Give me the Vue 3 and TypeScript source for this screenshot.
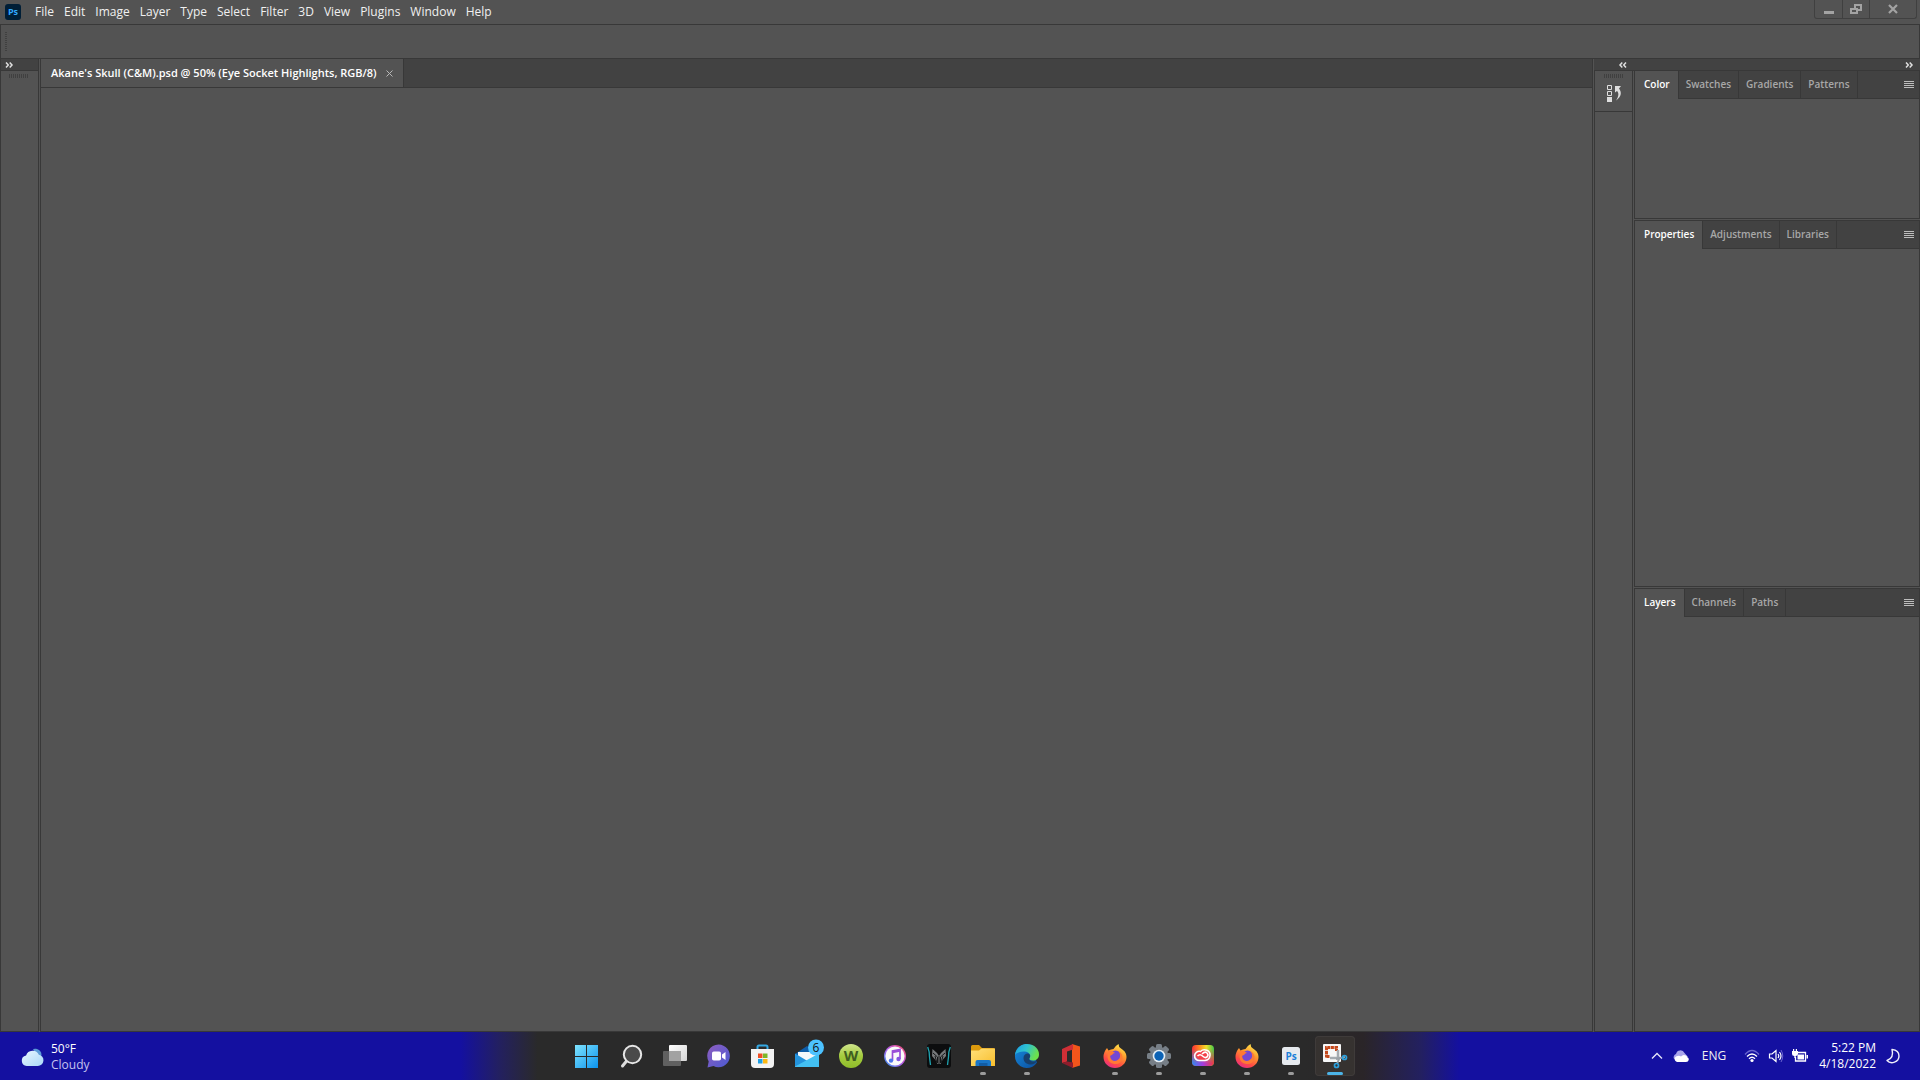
<script setup lang="ts">
interface PanelGroup {
  id: string
  tabs: string[]
}
interface TaskApp {
  id: string
  label: string
  running?: boolean
  active?: boolean
}

const menus: string[] = ['File', 'Edit', 'Image', 'Layer', 'Type', 'Select', 'Filter', '3D', 'View', 'Plugins', 'Window', 'Help']

const panels: PanelGroup[] = [
  { id: 'color', tabs: ['Color', 'Swatches', 'Gradients', 'Patterns'] },
  { id: 'properties', tabs: ['Properties', 'Adjustments', 'Libraries'] },
  { id: 'layers', tabs: ['Layers', 'Channels', 'Paths'] },
]

const apps: TaskApp[] = [
  { id: 'start', label: 'Start' },
  { id: 'search', label: 'Search' },
  { id: 'tasks', label: 'Task View' },
  { id: 'chat', label: 'Chat' },
  { id: 'store', label: 'Microsoft Store' },
  { id: 'mail', label: 'Mail' },
  { id: 'webroot', label: 'Webroot' },
  { id: 'itunes', label: 'iTunes' },
  { id: 'predator', label: 'PredatorSense' },
  { id: 'files', label: 'File Explorer', running: true },
  { id: 'edge', label: 'Microsoft Edge', running: true },
  { id: 'office', label: 'Office' },
  { id: 'firefox', label: 'Firefox', running: true },
  { id: 'settings', label: 'Settings', running: true },
  { id: 'cloud', label: 'Creative Cloud', running: true },
  { id: 'firefox', label: 'Firefox', running: true },
  { id: 'photoshop', label: 'Photoshop', running: true },
  { id: 'snip', label: 'Snipping Tool', running: true, active: true },
]

const gearTeeth: number[] = [0, 45, 90, 135, 180, 225, 270, 315]
</script>

<template>
  <div class="screen">
    <header class="menubar">
      <svg class="logo" viewBox="0 0 16 16" role="img" aria-label="Photoshop">
        <rect width="16" height="16" rx="3" fill="#001e36" />
        <text x="8" y="11" text-anchor="middle" class="ps" font-size="9" fill="#31a8ff">Ps</text>
      </svg>
      <nav class="menus">
        <button v-for="m in menus" :key="m" type="button">{{ m }}</button>
      </nav>
      <div class="window-controls">
        <button type="button" aria-label="Minimize">
          <svg width="12" height="12" viewBox="0 0 12 12"><path d="M1 8h10v3H1z" fill="#a3a3a3" /></svg>
        </button>
        <button type="button" aria-label="Restore">
          <svg width="12" height="12" viewBox="0 0 12 12"><path d="M5 5V2h6v5H8M1 6h6v4H1z" fill="none" stroke="#a3a3a3" stroke-width="2" /></svg>
        </button>
        <button type="button" class="wide" aria-label="Close">
          <svg width="12" height="12" viewBox="0 0 12 12"><path d="M2 2l8 8M10 2l-8 8" stroke="#a3a3a3" stroke-width="2.200" /></svg>
        </button>
      </div>
    </header>

    <div class="options"><span class="grip-v"></span></div>

    <main class="workspace">
      <aside class="tools">
        <div class="dock-head">
          <button type="button" class="chev" aria-label="Expand tools">
            <svg width="8" height="6" viewBox="0 0 8 6"><path d="M1 .5L3.300 3 1 5.500M4.700 .5L7 3 4.700 5.500" fill="none" stroke="#dedede" stroke-width="1.500" /></svg>
          </button>
        </div>
        <span class="grip-h"></span>
      </aside>

      <section class="document">
        <div class="doc-tabs">
          <div class="doc-tab">
            <span>Akane's Skull (C&amp;M).psd @ 50% (Eye Socket Highlights, RGB/8)</span>
            <button type="button" aria-label="Close document">
              <svg width="7" height="7" viewBox="0 0 7 7"><path d="M.5 .5l6 6M6.500 .5l-6 6" stroke="#b8b8b8" /></svg>
            </button>
          </div>
        </div>
        <div class="canvas"></div>
      </section>

      <div class="docks">
        <div class="dock-head between">
          <button type="button" class="chev" aria-label="Expand panels">
            <svg width="8" height="6" viewBox="0 0 8 6"><path d="M3.300 .5L1 3l2.300 2.500M7 .5L4.700 3 7 5.500" fill="none" stroke="#dedede" stroke-width="1.500" /></svg>
          </button>
          <button type="button" class="chev" aria-label="Collapse panels">
            <svg width="8" height="6" viewBox="0 0 8 6"><path d="M1 .5L3.300 3 1 5.500M4.700 .5L7 3 4.700 5.500" fill="none" stroke="#dedede" stroke-width="1.500" /></svg>
          </button>
        </div>
        <div class="dock-body">
          <aside class="icon-dock">
            <div class="icon-group">
              <span class="grip-h"></span>
              <button type="button" aria-label="History">
                <svg width="16" height="18" viewBox="0 0 16 18">
                  <path d="M1.500 1.500h4v4h-4zM1.500 7.500h4v4h-4z" fill="none" stroke="#dedede" />
                  <path d="M1 13h5v5H1z" fill="#dedede" />
                  <path d="M9 2h6l-2 2.500c3 4 2.500 8-3 12 3-4.500 3-7.500 1-9.500L9 8.500z" fill="#dedede" />
                </svg>
              </button>
            </div>
          </aside>
          <div class="panels">
            <section v-for="p in panels" :key="p.id" class="panel" :class="p.id">
              <div class="panel-tabs" role="tablist">
                <button v-for="(t, i) in p.tabs" :key="t" type="button" role="tab" :aria-selected="i === 0" :class="{ current: i === 0 }">{{ t }}</button>
                <button type="button" class="panel-menu" aria-label="Panel menu">
                  <svg width="10" height="8" viewBox="0 0 10 8"><path d="M0 .5h10M0 2.500h10M0 4.500h10M0 6.500h10" stroke="#bdbdbd" /></svg>
                </button>
              </div>
            </section>
          </div>
        </div>
      </div>
    </main>

    <footer class="taskbar">
      <button type="button" class="weather">
        <svg width="24" height="19" viewBox="0 0 22 18" aria-hidden="true">
          <defs>
            <linearGradient id="wc" x1="0" y1="0" x2="1" y2="1"><stop offset="0" stop-color="#e9f6ff" /><stop offset="1" stop-color="#a9d8f8" /></linearGradient>
          </defs>
          <path d="M12 1a6 6 0 0 1 8 6l-4 3z" fill="#5c9bd8" />
          <path d="M6 17a5 5 0 0 1-.6-9.900A6.500 6.500 0 0 1 17.500 6.300 5.400 5.400 0 0 1 16.500 17z" fill="url(#wc)" />
        </svg>
        <span class="lines"><span>50°F</span><span class="dim">Cloudy</span></span>
      </button>

      <nav class="apps" aria-label="Taskbar">
        <button v-for="(a, i) in apps" :key="i" type="button" :aria-label="a.label" :class="{ running: a.running, active: a.active }">
          <svg v-if="a.id === 'start'" viewBox="0 0 24 24">
            <defs><linearGradient id="st" x1="0" y1="0" x2="1" y2="1"><stop offset="0" stop-color="#7fe4ff" /><stop offset="1" stop-color="#0b93ee" /></linearGradient></defs>
            <path d="M0 1h11v11H0zM12 1h11v11H12zM0 13h11v11H0zM12 13h11v11H12z" fill="url(#st)" />
          </svg>
          <svg v-else-if="a.id === 'search'" viewBox="0 0 24 24">
            <path d="M8 16.500L3.500 22" stroke="#dcdcdc" stroke-width="3" stroke-linecap="round" />
            <circle cx="13.500" cy="10.500" r="8.700" fill="#4a4a4a" stroke="#e6e6e6" stroke-width="2" />
          </svg>
          <svg v-else-if="a.id === 'tasks'" viewBox="0 0 24 24">
            <defs><linearGradient id="tv" x1="0" y1="0" x2="1" y2="1"><stop offset="0" stop-color="#fff" /><stop offset="1" stop-color="#d5d5d5" /></linearGradient></defs>
            <rect x="6" y="1" width="18" height="16" rx="1" fill="url(#tv)" />
            <rect x="0" y="7" width="18" height="15" rx="1" fill="#606060" />
            <path d="M6 7h12v10H6z" fill="#a2a2a2" />
          </svg>
          <svg v-else-if="a.id === 'chat'" viewBox="0 0 24 24">
            <defs><linearGradient id="ch" x1="0" y1="0" x2="1" y2="1"><stop offset="0" stop-color="#8f5ec0" /><stop offset="1" stop-color="#4a5ad2" /></linearGradient></defs>
            <path d="M11.500 .6a11.300 11.300 0 1 1-5 21.400L.5 23.500 1.700 17.500A11.300 11.300 0 0 1 11.500 .6z" fill="url(#ch)" />
            <rect x="5" y="7.500" width="9" height="9" rx="1.800" fill="#fff" />
            <path d="M15 10.500l3.500-2.500v8L15 13.500z" fill="#fff" />
          </svg>
          <svg v-else-if="a.id === 'store'" viewBox="0 0 24 24">
            <path d="M6.500 7V3q0-1.500 1.500-1.500h7Q16.500 1.500 16.500 3v4" fill="none" stroke="#35a9e4" stroke-width="2" />
            <path d="M0 5h23v15q0 4-4 4H4q-4 0-4-4z" fill="#f3f3f3" />
            <path d="M7 9.500h4.500v4.500H7z" fill="#f04e23" /><path d="M12 9.500h4.500v4.500H12z" fill="#7db728" />
            <path d="M7 15h4.500v4.500H7z" fill="#1c9fe5" /><path d="M12 15h4.500v4.500H12z" fill="#fcb813" />
          </svg>
          <svg v-else-if="a.id === 'mail'" viewBox="0 0 24 24">
            <path d="M0 10L12 2l12 8v6H0z" fill="#0f5da8" />
            <path d="M3 8h18v6l-9 6-9-6z" fill="#f5f8fa" />
            <path d="M0 9.500L12.500 17 24 9.500V23H0z" fill="#2493dc" />
            <path d="M0 22.500L24 9.500V23H0z" fill="#43c0f2" />
            <circle cx="21" cy="3.500" r="8" fill="#4cc2ff" />
            <text x="21" y="8" text-anchor="middle" class="count" font-size="12" fill="#111">6</text>
          </svg>
          <svg v-else-if="a.id === 'webroot'" viewBox="0 0 24 24">
            <defs><linearGradient id="wr" x1="0" y1="0" x2="0" y2="1"><stop offset="0" stop-color="#d0e58d" /><stop offset=".5" stop-color="#a4cc3e" /><stop offset="1" stop-color="#8fbd2a" /></linearGradient></defs>
            <circle cx="12" cy="12" r="12" fill="url(#wr)" />
            <text x="12" y="17" text-anchor="middle" class="ps" font-size="15" fill="#3f5e21">W</text>
          </svg>
          <svg v-else-if="a.id === 'itunes'" viewBox="0 0 24 24">
            <defs><linearGradient id="it" x1="1" y1="0" x2="0" y2="1"><stop offset="0" stop-color="#ff5068" /><stop offset=".5" stop-color="#b45ae8" /><stop offset="1" stop-color="#2f9df0" /></linearGradient></defs>
            <circle cx="12" cy="12" r="11" fill="url(#it)" /><circle cx="12" cy="12" r="9.600" fill="#fafafa" />
            <path d="M9.500 16.500V7l7.500-1.500v9.500M9.500 8.500l7.500-1.500" fill="none" stroke="#9a4fd8" stroke-width="1.700" />
            <circle cx="8" cy="16.600" r="2.200" fill="#4f74ea" /><circle cx="15.500" cy="15" r="2.200" fill="#8656e0" />
          </svg>
          <svg v-else-if="a.id === 'predator'" viewBox="0 0 24 24">
            <rect width="24" height="24" rx="3" fill="#0c0d0e" />
            <path d="M.7 3q2 5 1.800 10l1 8M23.300 3q-2 5-1.800 10l-1 8" fill="none" stroke="#1fa3b0" stroke-width="1.300" />
            <path d="M5.500 5l4.500 4 2 3 2-3 4.500-4 .5 7-3.500 4-2 4h-3l-2-4L5 12z" fill="#76797b" />
            <path d="M6 9l4.500 4v6M18 9l-4.500 4v6M12 12v8M8 12l2 7M16 12l-2 7" fill="none" stroke="#141617" />
          </svg>
          <svg v-else-if="a.id === 'files'" viewBox="0 0 24 24">
            <defs><linearGradient id="fe" x1="0" y1="0" x2="1" y2="1"><stop offset="0" stop-color="#ffe07a" /><stop offset="1" stop-color="#f8be2d" /></linearGradient></defs>
            <path d="M0 2.500Q0 1 1.500 1H8l3 3h11.500Q24 4 24 5.500V10H0z" fill="#dc9a0d" />
            <path d="M0 6.500h8l2.500-2H24V22H0z" fill="url(#fe)" />
            <path d="M4.500 22v-4q0-2 2-2H18q2 0 2 2v4z" fill="#1976c8" /><path d="M8 19h8.500v3H8z" fill="#125da5" />
          </svg>
          <svg v-else-if="a.id === 'edge'" viewBox="0 0 24 24">
            <defs>
              <linearGradient id="e1" x1="0" y1="0" x2="1" y2=".4"><stop offset="0" stop-color="#1b9de5" /><stop offset=".5" stop-color="#2fc2cf" /><stop offset="1" stop-color="#6ce04c" /></linearGradient>
              <linearGradient id="e2" x1="0" y1="0" x2="1" y2="1"><stop offset="0" stop-color="#168bdc" /><stop offset="1" stop-color="#0c4f9f" /></linearGradient>
            </defs>
            <path d="M12 0a12 12 0 1 0 10 18.500L20 14 12 6z" fill="url(#e2)" />
            <path d="M0 11C1 4 6 0 12 0c8 0 12 5.500 12 10.500 0 4-3 6-6 6-2.500 0-4.500-1-3.500-2.500C16.500 11 14 8 10 7.500 5.500 7 2 8.500 0 11z" fill="url(#e1)" />
            <path d="M8.500 14c0-3 2-4.500 4-4.500 2.500 0 3.500 2.500 2 4.500-1 2 1.500 3.500 4 3.500 1.500 0 3-.5 4-1-2 3-5 4.500-7.500 4C11 20 8.500 17.500 8.500 14z" fill="#17406d" />
          </svg>
          <svg v-else-if="a.id === 'office'" viewBox="0 0 24 24">
            <path d="M13 0l8 2.500v19L13 24z" fill="#f2551b" />
            <path d="M14 0v5.500L8 7.500v10L3 19V5z" fill="#cf2f36" />
            <path d="M3 19l5-1.500 6 1V24z" fill="#8f1d2c" />
          </svg>
          <svg v-else-if="a.id === 'firefox'" viewBox="0 0 24 24">
            <defs>
              <linearGradient id="ff" x1=".8" y1="0" x2=".3" y2="1"><stop offset="0" stop-color="#fff04f" /><stop offset=".4" stop-color="#ff9a2d" /><stop offset=".75" stop-color="#ff4b44" /><stop offset="1" stop-color="#e52d87" /></linearGradient>
            </defs>
            <path d="M4 4l1.500 2.500Q8 5 10.500 5 12 2 15.500 0q0 3 2.500 4.500C22 7 23.500 9.500 23.500 13a11.400 11 0 1 1-23 0Q.5 8 4 4z" fill="url(#ff)" />
            <circle cx="12.500" cy="12" r="5.500" fill="#7448d4" />
            <path d="M5 7q4-1 7 2-2 0-3 2-2 0-2 2 1 4 5 4 4-1 5-4 .5-4-2-6 5 2 4.500 8-2 5.500-8 5-6.500-1-7-7z" fill="#ff7a35" />
          </svg>
          <svg v-else-if="a.id === 'settings'" viewBox="0 0 24 24">
            <g fill="#777f87"><rect v-for="t in gearTeeth" :key="t" x="9" y="0" width="6" height="7" rx="1.500" :transform="`rotate(${t} 12 12)`" /></g>
            <circle cx="12" cy="12" r="9.300" fill="#777f87" />
            <circle cx="12" cy="12" r="6.300" fill="#e3edf5" /><circle cx="12" cy="12" r="4.700" fill="#0b62b5" />
          </svg>
          <svg v-else-if="a.id === 'cloud'" viewBox="0 0 24 24">
            <defs>
              <linearGradient id="c1" x1="0" y1="0" x2="1" y2="0"><stop offset="0" stop-color="#fc3038" /><stop offset=".35" stop-color="#ff8c20" /><stop offset=".65" stop-color="#f0e02a" /><stop offset="1" stop-color="#43c54a" /></linearGradient>
              <linearGradient id="c2" x1="0" y1="0" x2="1" y2="0"><stop offset="0" stop-color="#2d8cf0" /><stop offset=".5" stop-color="#a53be0" /><stop offset="1" stop-color="#f03a3a" /></linearGradient>
              <linearGradient id="c3" x1="0" y1="0" x2="0" y2="1"><stop offset=".2" stop-color="#fff" stop-opacity="0" /><stop offset=".8" stop-color="#fff" /></linearGradient>
              <mask id="cm"><rect width="24" height="24" fill="url(#c3)" /></mask>
            </defs>
            <rect x="1" y="1" width="22" height="21" rx="4" fill="url(#c1)" />
            <rect x="1" y="1" width="22" height="21" rx="4" fill="url(#c2)" mask="url(#cm)" />
            <ellipse cx="12" cy="11.500" rx="7" ry="5" fill="#f2404a" />
            <path d="M8.500 16.500a4.600 4.600 0 1 1 1-9 5.500 5 0 0 1 9.500 4q-.5 4.500-5 5zM6.500 12q2.500-2.500 5 0t4.500 1q2-2 0-4t-5 1" fill="none" stroke="#fff" stroke-width="1.600" />
          </svg>
          <svg v-else-if="a.id === 'photoshop'" viewBox="0 0 24 24">
            <rect x="3" y="3" width="18" height="18" rx="2.500" fill="#e6eaee" />
            <text x="12" y="15.500" text-anchor="middle" class="ps" font-size="10" fill="#1c7fd8">Ps</text>
          </svg>
          <svg v-else viewBox="0 0 24 24">
            <rect x="0" y="0" width="18" height="18" rx="1" fill="#f7f7f7" />
            <path d="M3.500 13.500V3.500H13.500V7M3.500 12.500H7" fill="none" stroke="#c4481c" stroke-width="3" stroke-dasharray="3 .6" />
            <path d="M15 6v9M7 14h10" stroke="#a5abb0" stroke-width="2.500" />
            <path d="M13 15l9-2M16 15l-2 5" stroke="#9aa1a6" stroke-width="2" />
            <circle cx="21.500" cy="13.500" r="2" fill="none" stroke="#2ba0dd" stroke-width="1.700" /><circle cx="13.500" cy="21.500" r="2" fill="none" stroke="#2ba0dd" stroke-width="1.700" />
          </svg>
        </button>
      </nav>

      <div class="tray">
        <button type="button" aria-label="Show hidden icons">
          <svg width="12" height="8" viewBox="0 0 12 8"><path d="M1 6.500l5-5 5 5" fill="none" stroke="#e6e6f8" stroke-width="1.300" /></svg>
        </button>
        <button type="button" aria-label="OneDrive">
          <svg width="16" height="12" viewBox="0 0 16 12"><path d="M1 9a3.600 3.600 0 0 1 2-5 4.500 4.500 0 0 1 8.500-1L15 7z" fill="#a9a5ea" /><path d="M4 12a3 3 0 0 1-1-5.500Q6 5 8 6.500 10 4 13 5.500q1 .5 1 1.500 2 .8 1.800 2.800Q15.300 12 13 12z" fill="#fff" /></svg>
        </button>
        <button type="button" class="lang">ENG</button>
        <button type="button" class="status" aria-label="Network, volume and battery">
          <svg width="16" height="14" viewBox="0 0 16 14">
            <path d="M1 5.500q7-8 14 0" fill="none" stroke="#6a66cf" stroke-width="1.300" />
            <path d="M3 7.500q5-5 10 0M5 9.800q3-3 6 0" fill="none" stroke="#fff" stroke-width="1.300" /><circle cx="8" cy="11.500" r="1.600" fill="#fff" />
          </svg>
          <svg width="16" height="14" viewBox="0 0 16 14">
            <path d="M1.500 5h2.500l4-3.500v11L4 9H1.500z" fill="none" stroke="#fff" stroke-width="1.200" />
            <path d="M10 5q1.500 2 0 4M11.500 3q3 4 0 8" fill="none" stroke="#fff" stroke-width="1.200" /><path d="M13 1q3.500 6 0 12" fill="none" stroke="#6a66cf" />
          </svg>
          <svg width="16" height="14" viewBox="0 0 16 14">
            <path d="M6 3.500h7.500v8.500h-10V8" fill="none" stroke="#fff" stroke-width="1.300" /><path d="M5.500 5.500h6.500v5H5.500zM14.500 6H16v3.500h-1.500z" fill="#fff" />
            <path d="M0 2h6v3q0 2-2.300 2v2H2.300V7Q0 7 0 5zM1 0h1.200v2H1zM3.800 0H5v2H3.800z" fill="#fff" />
          </svg>
        </button>
        <button type="button" class="lines clock"><span>5:22 PM</span><span>4/18/2022</span></button>
        <button type="button" aria-label="Focus assist">
          <svg width="14" height="16" viewBox="0 0 14 16"><path d="M6 1.500C11 2 13 5 13 8c0 6-8 9-12 4.500C5.500 11 7.500 7 6 1.500z" fill="none" stroke="#f0f0fc" stroke-width="1.400" stroke-linejoin="round" /></svg>
        </button>
      </div>
    </footer>
  </div>
</template>

<style>
body {
  margin: 0;
  background: #535353;
}
</style>

<style scoped>
.screen {
  display: flex;
  flex-direction: column;
  height: 100vh;
  overflow: hidden;
  background: #535353;
  color: #f0f0f0;
  font: 12px/16px "Open Sans", "Noto Sans", sans-serif;
}
* {
  box-sizing: border-box;
}
button {
  display: flex;
  align-items: center;
  justify-content: center;
  flex: none;
  margin: 0;
  padding: 0;
  border: 0;
  background: none;
  color: inherit;
  font: inherit;
}
svg {
  display: block;
  flex: none;
  overflow: visible;
}
.ps {
  font-family: "Open Sans", sans-serif;
  font-weight: 700;
}
.count {
  font-family: "Open Sans", sans-serif;
}
.menubar {
  display: flex;
  flex: none;
  height: 25px;
  padding-left: 5px;
  border-bottom: 1px solid #383838;
}
.logo {
  width: 16px;
  height: 16px;
  margin-top: 4px;
}
.menus {
  display: flex;
  gap: 10px;
  margin-left: 14px;
}
.window-controls {
  display: flex;
  height: 19px;
  margin: 0 3px 0 auto;
  border: 1px solid #404040;
  border-top: 0;
  border-radius: 0 0 3px 3px;
}
.window-controls button {
  width: 27px;
}
.window-controls button + button {
  border-left: 1px solid #404040;
}
.window-controls button.wide {
  width: 47px;
}
.options {
  display: flex;
  align-items: center;
  flex: none;
  height: 34px;
  padding-left: 4px;
  border: 1px solid #383838;
  border-width: 0 1px 1px;
}
.grip-v {
  width: 2px;
  height: 20px;
  background: repeating-linear-gradient(#404040 0 1px, transparent 1px 2px);
}
.grip-h {
  display: block;
  width: 20px;
  height: 4px;
  background: repeating-linear-gradient(90deg, #404040 0 1px, transparent 1px 2px);
}
.workspace {
  display: flex;
  flex: 1;
  min-height: 0;
  gap: 1px;
}
.tools,
.icon-dock {
  flex: none;
  width: 39px;
  border: 1px solid #383838;
  border-width: 0 1px 1px;
}
.tools > .grip-h {
  margin: 3px 0 0 8px;
}
.dock-head {
  display: flex;
  align-items: center;
  height: 12px;
  padding: 0 4px;
  background: #424242;
  border-bottom: 1px solid #383838;
}
.dock-head.between {
  justify-content: space-between;
  padding: 0 7px 0 25px;
}
.document {
  display: flex;
  flex: 1;
  flex-direction: column;
  min-width: 0;
  border: 1px solid #383838;
  border-width: 0 1px 1px;
}
.doc-tabs {
  display: flex;
  height: 29px;
  background: #424242;
  border-bottom: 1px solid #383838;
}
.doc-tab {
  display: flex;
  align-items: center;
  gap: 9px;
  padding: 0 10px;
  background: #535353;
  border-right: 1px solid #383838;
  color: #fff;
  font-size: 11px;
  font-weight: 600;
}
.canvas {
  flex: 1;
}
.docks {
  display: flex;
  flex: none;
  flex-direction: column;
  width: 326px;
}
.dock-body {
  display: flex;
  flex: 1;
  min-height: 0;
  gap: 1px;
}
.icon-group {
  display: flex;
  flex-direction: column;
  align-items: center;
  gap: 6px;
  height: 41px;
  padding-top: 3px;
  border-bottom: 1px solid #383838;
}
.panels {
  display: flex;
  flex: 1;
  flex-direction: column;
  gap: 1px;
}
.panel {
  border: 1px solid #383838;
}
.panel.color {
  height: 148px;
  border-top: 0;
}
.panel.properties {
  height: 367px;
}
.panel.layers {
  flex: 1;
}
.panel-tabs {
  display: flex;
  height: 28px;
  background: #424242;
  color: #a8a8a8;
  font-size: 10px;
  font-weight: 600;
}
.panel-tabs button {
  padding: 0 7px 2px;
  border: 1px solid #383838;
  border-width: 0 1px 1px 0;
}
.panel-tabs button.current {
  padding: 0 8px 2px 9px;
  border-bottom: 0;
  background: #535353;
  color: #fff;
}
.panel-tabs button.panel-menu {
  flex: 1;
  justify-content: flex-end;
  padding: 0 5px;
  border-right: 0;
}
.taskbar {
  display: grid;
  grid-template-columns: 1fr auto 1fr;
  align-items: center;
  flex: none;
  height: 48px;
  background: linear-gradient(90deg, #1410a0 0, #1410a0 24%, #232060 26%, #2a2a2a 28%, #2a2a2a 68%, #2a2528 71%, #232060 74%, #1410a0 76%);
}
.weather {
  justify-self: start;
  gap: 7px;
  padding-top: 2px;
  margin-left: 20px;
}
.lines {
  display: flex;
  flex-direction: column;
  align-items: flex-start;
  color: #fff;
}
.dim {
  color: #c4c3ee;
}
.apps {
  display: flex;
  gap: 4px;
  margin-left: 2px;
}
.apps button {
  position: relative;
  width: 40px;
  height: 40px;
  border-radius: 4px;
}
.apps svg {
  width: 24px;
  height: 24px;
}
.apps button.running::after {
  content: "";
  position: absolute;
  bottom: 1px;
  left: 17px;
  width: 6px;
  height: 3px;
  border-radius: 2px;
  background: #9b9b9b;
}
.apps button.active {
  background: #363230;
  box-shadow: inset 0 0 0 1px #3f3b3a;
}
.apps button.active::after {
  left: 12px;
  width: 16px;
  background: #4cb4e8;
}
.tray {
  display: flex;
  align-items: center;
  justify-self: end;
  gap: 10px;
  margin-right: 20px;
}
.lang {
  margin: 0 8px 0 3px;
}
.status {
  gap: 8px;
}
.tray .clock {
  align-items: flex-end;
  margin-left: 1px;
}
</style>
